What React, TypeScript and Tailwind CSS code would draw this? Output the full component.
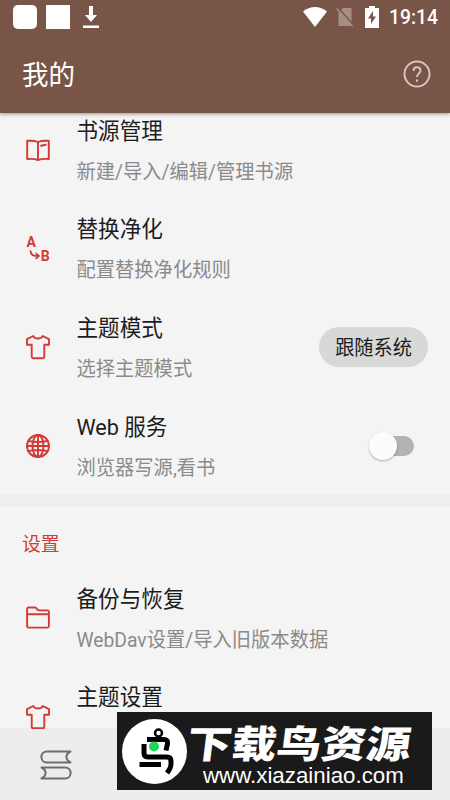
import React from 'react';
import cx from 'clsx';

const iconMap: { [key: string]: React.ReactNode } = {
  book: (
    <>
      <path d="M12 4C9.5 2.900 5 2.600 1.200 2.800V21c4-.3 8.200 0 10.800 1 2.600-1 6.800-1.300 10.800-1V2.800C19 2.600 14.500 2.900 12 4zM12 4v18" />
      <path d="M15 7.800l4.800-1" />
    </>
  ),
  replace: (
    <>
      <path d="M4.500 14.200c.3 2.600 2 4.500 4.600 4.700h2.700" />
      <path d="M10.300 16.600l2.600 2.300-2.600 2.300" />
    </>
  ),
  shirt: (
    <path d="M7.300 1L1 4.200v5.600h4.700v12c0 .9.600 1.500 1.500 1.500h9.600c.9 0 1.500-.600 1.500-1.500v-12H23V4.200L16.700 1c-.5 1.500-2.400 2.500-4.700 2.500S7.800 2.500 7.300 1z" />
  ),
  globe: (
    <>
      <circle cx="12" cy="12" r="11" />
      <ellipse cx="12" cy="12" rx="5.500" ry="11" />
      <path d="M12 1v22M1 12h22M2.600 6.800c5 1.600 13.800 1.600 18.800 0M2.600 17.200c5-1.600 13.800-1.600 18.800 0" />
    </>
  ),
  folder: (
    <path d="M1.100 8.300V3c0-.9.600-1.500 1.500-1.500h6.600c1.500 0 1.700 2.900 3.600 2.900h8.600c.9 0 1.500.6 1.500 1.500v14.200c0 .9-.6 1.500-1.500 1.500H2.600c-.9 0-1.500-.6-1.500-1.500V8.300h21.800" />
  ),
};

interface SettingItem {
  title: string;
  summary: string;
  iconKey: string;
  action?: React.ReactNode;
}

const SettingRow: React.FC<SettingItem> = ({ title, summary, iconKey, action }) => (
  <li className="flex h-[98.6px] items-center pr-[22px] pl-[26px]">
    <svg
      viewBox="0 0 24 24"
      className="size-6 flex-none overflow-visible fill-none stroke-[#d33a35] stroke-[1.9]"
      strokeLinecap="round"
      strokeLinejoin="round"
    >
      {iconMap[iconKey]}
      {iconKey === 'replace' && (
        <g className="fill-[#d33a35] stroke-none text-[14px] font-bold">
          <text x="0.500" y="10.300">A</text>
          <text x="14.800" y="24">B</text>
        </g>
      )}
    </svg>
    <div className="ml-[26.500px] flex-1 pt-[3px] whitespace-nowrap">
      <div className="scale-y-105 text-[21.600px] leading-8 text-[#1c1c1c]">{title}</div>
      <div className="mt-2.5 h-[30px] scale-y-105 text-[19.300px] leading-[30px] text-[#8b8b8b]">
        {summary}
      </div>
    </div>
    {action}
  </li>
);

const Switch = ({ on }: { on: boolean }) => (
  <div className={cx('mr-[14.500px] flex w-[45px] items-center', on && 'flex-row-reverse')}>
    <div className="z-10 size-7 flex-none rounded-full bg-[#fcfcfc] shadow-[0_1px_2px_rgba(0,0,0,0.3)]" />
    <div className="-ml-4 h-5 flex-1 rounded-full bg-[#b3b3b3]" />
  </div>
);

const serviceItems: SettingItem[] = [
  { title: '书源管理', summary: '新建/导入/编辑/管理书源', iconKey: 'book' },
  { title: '替换净化', summary: '配置替换净化规则', iconKey: 'replace' },
  {
    title: '主题模式',
    summary: '选择主题模式',
    iconKey: 'shirt',
    action: (
      <button className="h-10 w-[109px] rounded-full bg-[#d8d8d8] pt-[3px] text-[19.200px] text-[#1c1c1c]">
        <span className="block scale-y-105">跟随系统</span>
      </button>
    ),
  },
  { title: 'Web 服务', summary: '浏览器写源,看书', iconKey: 'globe', action: <Switch on={false} /> },
];

const settingItems: SettingItem[] = [
  { title: '备份与恢复', summary: 'WebDav设置/导入旧版本数据', iconKey: 'folder' },
  { title: '主题设置', summary: '', iconKey: 'shirt' },
];

const StatusBar = () => (
  <div className="flex h-[34px] items-center pr-3 pl-[12.500px] text-white">
    <div className="size-6 rounded-[5px] bg-white" />
    <div className="ml-[9px] size-6 bg-white" />
    <svg viewBox="0 0 16 22" className="ml-[13px] h-[22px] w-4 fill-white">
      <path d="M6 0h4v9h4L8 16 2 9h4zM0 19.500h16V22H0z" />
    </svg>
    <div className="flex-1" />
    <svg viewBox="0 0 24 20" className="h-5 w-6 fill-white">
      <path d="M0 4.500C7-1.500 17-1.500 24 4.500L12 20z" />
    </svg>
    <svg viewBox="0 0 18 20" className="ml-[8.500px] h-5 w-[18px]">
      <path className="fill-[#a78d82]" d="M7 1h8.500v18H2.500V6z" />
      <path className="stroke-[#795548] stroke-[1.500]" d="M1.800.5l16.500 18.500" />
      <path className="stroke-[#a78d82] stroke-[1.500]" d="M.6 1.600l16 17.800" />
    </svg>
    <svg viewBox="0 0 14 22" className="ml-[11.500px] h-[22px] w-3.500">
      <path className="fill-white" d="M4 0h6v2h4v20H0V2h4z" />
      <path className="fill-[#795548]" d="M8 5l-5 7.500h3V18l5-7.500H8z" />
    </svg>
    <span className="mt-[2px] ml-2.5 scale-y-105 text-[19.300px] leading-none font-medium">19:14</span>
  </div>
);

/** Bird emblem, site name and address */
const SiteBanner = () => (
  <div className="absolute top-[712px] left-[117px] flex h-[78px] w-[315px] items-center bg-[#1a1a1a] text-white">
    <svg viewBox="0 0 65 65" className="ml-[5px] size-[65px] flex-none fill-none stroke-black stroke-[5]">
      <circle cx="32.500" cy="32.500" r="32.500" className="fill-white stroke-none" />
      <circle cx="36.500" cy="14" r="3.500" className="stroke-[2.500]" />
      <path d="M25 20.500h17q4 0 3.500 4l-1.500 7" />
      <path d="M22 25v9q0 4 4 4h19q4 0 4 4v3q0 4-4 9" />
      <path d="M17.500 45.500H39" />
      <circle cx="32" cy="27.500" r="5" className="fill-[#22d65c] stroke-none" />
    </svg>
    <div className="flex h-full flex-col whitespace-nowrap">
      <div className="mt-[12px] h-[42px] origin-left -skew-x-6 scale-y-85 text-[44.800px] leading-[42px] font-black">
        下载鸟资源
      </div>
      <div className="-mt-[2px] ml-4 font-['Liberation_Sans'] text-[22.300px] leading-6">
        www.xiazainiao.com
      </div>
    </div>
  </div>
);

export default function App() {
  return (
    <div className="relative flex h-[800px] w-[450px] flex-col overflow-hidden bg-[#f4f4f4] font-['Roboto','Noto_Sans_CJK_SC',sans-serif]">
      <header className="z-10 h-[113px] flex-none bg-[#795548] shadow-[0_1px_4px_rgba(0,0,0,0.4)]">
        <StatusBar />
        <div className="flex h-[79px] items-center justify-between pr-[19px] pl-[22px] text-white">
          <h1 className="scale-y-105 pt-[2px] text-[26.500px]">我的</h1>
          <svg viewBox="0 0 28 28" className="size-7 fill-none stroke-[#d7c4bc] stroke-2">
            <circle cx="14" cy="14" r="12.500" />
            <path d="M10.500 11c0-2.200 1.500-3.700 3.500-3.700s3.500 1.400 3.500 3.400c0 2.600-3.500 2.900-3.500 6.300M14 19.500v2.200" />
          </svg>
        </div>
      </header>

      {/* Scrolled list, the first row starts under the header */}
      <main className="relative -mb-px min-h-0 flex-1 overflow-hidden">
        <ul className="-mt-3">
          {serviceItems.map((item) => (
            <SettingRow key={item.title} {...item} />
          ))}
        </ul>
        <div className="h-3 bg-[#eeeeee]" />
        <h2 className="h-[61.500px] pt-[23px] pl-[22px] text-[18.800px] leading-[30px] text-[#d33a35]">设置</h2>
        <ul>
          {settingItems.map((item) => (
            <SettingRow key={item.title} {...item} />
          ))}
        </ul>
      </main>

      {/* Bottom navigation */}
      <nav className="flex h-[72px] flex-none items-center bg-[#ededed] pt-[2px] pl-10">
        <svg
          viewBox="0 0 32 30"
          className="h-[30px] w-8 fill-none stroke-[#6d6d6d] stroke-2"
          strokeLinejoin="round"
        >
          <path d="M30.500 1.500H7C-.5 1.500-.5 12.500 7 12.500h23.500C25 9.500 25 4.500 30.500 1.500z" />
          <path d="M1.500 17.500H25c7.500 0 7.500 11 0 11H1.500c5.500-3 5.500-8 0-11z" />
        </svg>
      </nav>

      <SiteBanner />
    </div>
  );
}
